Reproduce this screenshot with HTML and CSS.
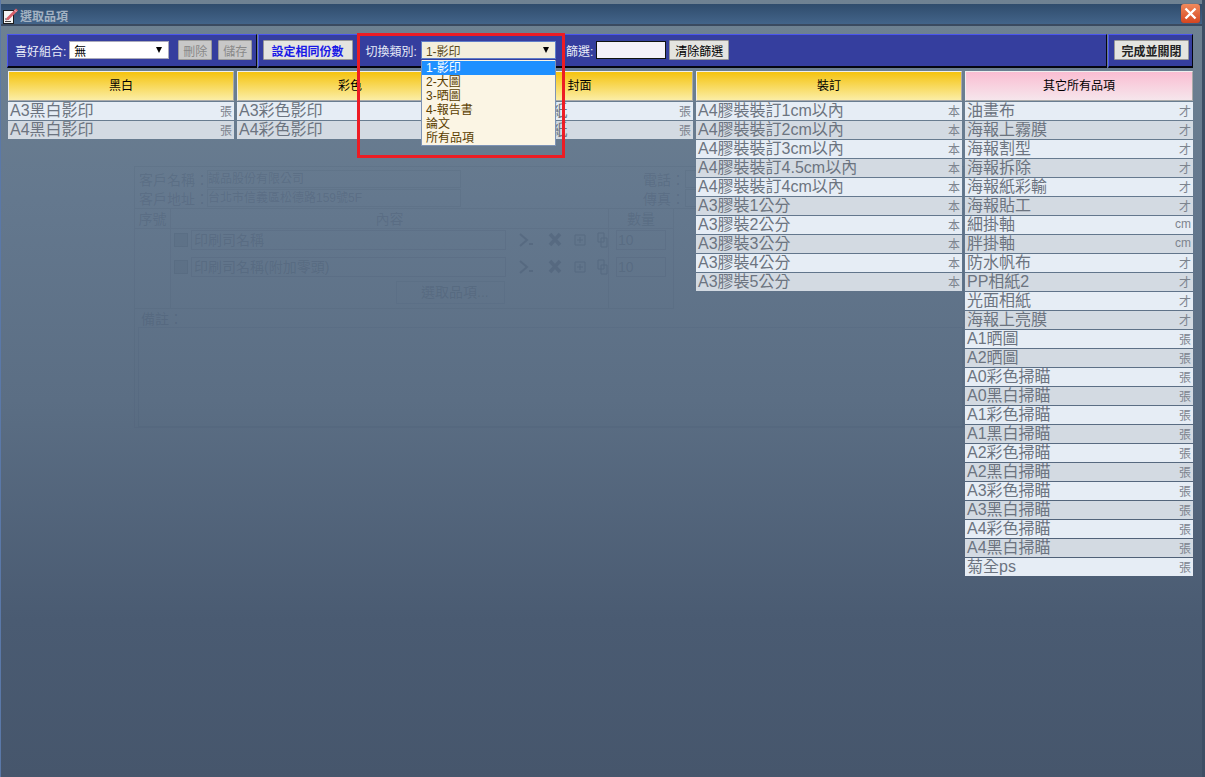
FILE: index.html
```html
<!DOCTYPE html>
<html lang="zh-Hant">
<head>
<meta charset="UTF-8">
<title>選取品項</title>
<link rel="stylesheet" href="styles.css">
</head>
<body>

<div class="dialog">

  <!-- the page behind the dialog, seen faintly through it -->
  <div class="ghost">
    <div class="g-row g-info">
      <span class="g-label">客戶名稱：</span>
      <div class="g-field">誠品股份有限公司</div>
      <span class="g-side">電話：</span>
      <div class="g-side-field"></div>
    </div>
    <div class="g-row g-info">
      <span class="g-label">客戶地址：</span>
      <div class="g-field">台北市信義區松德路159號5F</div>
      <span class="g-side">傳真：</span>
      <div class="g-side-field"></div>
    </div>
    <div class="g-table">
      <div class="g-c1 g-head">序號</div>
      <div class="g-c2 g-head">內容</div>
      <div class="g-c3 g-head">數量</div>
      <div class="g-c1 g-body"></div>
      <div class="g-c2 g-body">
        <div class="g-line">
          <i class="g-check"></i>
          <div class="g-name">印刷司名稱</div>
          <svg class="g-tools" width="90" height="16" viewBox="0 0 90 16"><path d="M2 2l7 6-7 6M11 12h4" stroke="#3e506a" stroke-width="2" fill="none"/><path d="M32 2l10 11M42 2L32 13" stroke="#3e506a" stroke-width="3.5"/><path d="M57 3h10v10H57zM62 5v6M59 8h6" stroke="#3e506a" fill="none"/><path d="M80 1h6v9h-6zM83 6h6v9h-6z" stroke="#3e506a" fill="none"/></svg>
        </div>
        <div class="g-line">
          <i class="g-check"></i>
          <div class="g-name">印刷司名稱(附加零頭)</div>
          <svg class="g-tools" width="90" height="16" viewBox="0 0 90 16"><path d="M2 2l7 6-7 6M11 12h4" stroke="#3e506a" stroke-width="2" fill="none"/><path d="M32 2l10 11M42 2L32 13" stroke="#3e506a" stroke-width="3.5"/><path d="M57 3h10v10H57zM62 5v6M59 8h6" stroke="#3e506a" fill="none"/><path d="M80 1h6v9h-6zM83 6h6v9h-6z" stroke="#3e506a" fill="none"/></svg>
        </div>
        <div class="g-pick">選取品項...</div>
      </div>
      <div class="g-c3 g-body">
        <div class="g-qty">10</div>
        <div class="g-qty">10</div>
      </div>
    </div>
    <div class="g-note-label">備註：</div>
    <div class="g-note"></div>
  </div>

  <div class="titlebar">
    <svg class="title-icon" width="17" height="17" viewBox="0 0 17 17">
      <rect x="1.5" y="3.5" width="10" height="13" fill="#f4f4f4" stroke="#1c1c1c"/>
      <path d="M3 12h4M3 14.5h6" stroke="#444"/>
      <path d="M5 10.5l9-9 2 2-9 9-3 1z" fill="#d8606a"/>
      <path d="M12.5 3l2 2" stroke="#f6c0c4"/>
    </svg>
    <span class="title-text">選取品項</span>
    <div class="close-btn">
      <svg width="13" height="13" viewBox="0 0 13 13"><path d="M1.5 1.5l10 10M11.5 1.5l-10 10" stroke="#fff" stroke-width="2.4"/></svg>
    </div>
  </div>

  <div class="content">
    <div class="toolbar">
      <div class="tool-group group-fav">
        <span class="tool-label">喜好組合:</span>
        <div class="select fav-select"><span>無</span><i class="arrow"></i></div>
        <button class="btn btn-off">刪除</button>
        <button class="btn btn-off">儲存</button>
      </div>
      <div class="tool-group group-main">
        <button class="btn btn-blue">設定相同份數</button>
        <span class="tool-label label-switch">切換類別:</span>
        <div class="select cat-select"><span>1-影印</span><i class="arrow"></i></div>
        <span class="tool-label label-filter">篩選:</span>
        <input class="filter-input" type="text">
        <button class="btn btn-clear">清除篩選</button>
      </div>
      <div class="tool-group group-done">
        <button class="btn btn-done">完成並關閉</button>
      </div>
    </div>

    <div class="columns">
      <div class="col col-a">
        <div class="col-head">黑白</div>
        <div class="item"><span>A3黑白影印</span><em>張</em></div>
        <div class="item"><span>A4黑白影印</span><em>張</em></div>
      </div>
      <div class="col col-a">
        <div class="col-head">彩色</div>
        <div class="item"><span>A3彩色影印</span><em>張</em></div>
        <div class="item"><span>A4彩色影印</span><em>張</em></div>
      </div>
      <div class="col col-b">
        <div class="col-head">封面</div>
        <div class="item"><span>A3封面雲彩紙</span><em>張</em></div>
        <div class="item"><span>A4封面雲彩紙</span><em>張</em></div>
      </div>
      <div class="col col-c">
        <div class="col-head">裝訂</div>
        <div class="item"><span>A4膠裝裝訂1cm以內</span><em>本</em></div>
        <div class="item"><span>A4膠裝裝訂2cm以內</span><em>本</em></div>
        <div class="item"><span>A4膠裝裝訂3cm以內</span><em>本</em></div>
        <div class="item"><span>A4膠裝裝訂4.5cm以內</span><em>本</em></div>
        <div class="item"><span>A4膠裝裝訂4cm以內</span><em>本</em></div>
        <div class="item"><span>A3膠裝1公分</span><em>本</em></div>
        <div class="item"><span>A3膠裝2公分</span><em>本</em></div>
        <div class="item"><span>A3膠裝3公分</span><em>本</em></div>
        <div class="item"><span>A3膠裝4公分</span><em>本</em></div>
        <div class="item"><span>A3膠裝5公分</span><em>本</em></div>
      </div>
      <div class="col col-d">
        <div class="col-head head-pink">其它所有品項</div>
        <div class="item"><span>油畫布</span><em>才</em></div>
        <div class="item"><span>海報上霧膜</span><em>才</em></div>
        <div class="item"><span>海報割型</span><em>才</em></div>
        <div class="item"><span>海報拆除</span><em>才</em></div>
        <div class="item"><span>海報紙彩輸</span><em>才</em></div>
        <div class="item"><span>海報貼工</span><em>才</em></div>
        <div class="item"><span>細掛軸</span><em>cm</em></div>
        <div class="item"><span>胖掛軸</span><em>cm</em></div>
        <div class="item"><span>防水帆布</span><em>才</em></div>
        <div class="item"><span>PP相紙2</span><em>才</em></div>
        <div class="item"><span>光面相紙</span><em>才</em></div>
        <div class="item"><span>海報上亮膜</span><em>才</em></div>
        <div class="item"><span>A1晒圖</span><em>張</em></div>
        <div class="item"><span>A2晒圖</span><em>張</em></div>
        <div class="item"><span>A0彩色掃瞄</span><em>張</em></div>
        <div class="item"><span>A0黑白掃瞄</span><em>張</em></div>
        <div class="item"><span>A1彩色掃瞄</span><em>張</em></div>
        <div class="item"><span>A1黑白掃瞄</span><em>張</em></div>
        <div class="item"><span>A2彩色掃瞄</span><em>張</em></div>
        <div class="item"><span>A2黑白掃瞄</span><em>張</em></div>
        <div class="item"><span>A3彩色掃瞄</span><em>張</em></div>
        <div class="item"><span>A3黑白掃瞄</span><em>張</em></div>
        <div class="item"><span>A4彩色掃瞄</span><em>張</em></div>
        <div class="item"><span>A4黑白掃瞄</span><em>張</em></div>
        <div class="item"><span>菊全ps</span><em>張</em></div>
      </div>
    </div>
  </div>

  <div class="dropdown">
    <div class="opt opt-on">1-影印</div>
    <div class="opt">2-大圖</div>
    <div class="opt">3-晒圖</div>
    <div class="opt">4-報告書</div>
    <div class="opt">論文</div>
    <div class="opt">所有品項</div>
  </div>
  <div class="red-box"></div>

</div>

</body>
</html>
```

FILE: styles.css
```css
html, body {
  margin: 0;
  padding: 0;
  height: 100%;
  overflow: hidden;
}
body {
  font-family: "Liberation Sans", "Noto Sans CJK TC", sans-serif;
  background-color: #4a5c74;
}
.dialog {
  position: relative;
  height: 777px;
  box-sizing: border-box;
  padding-top: 4px;
  background: linear-gradient(#6f8292 0, #64788e 200px, #5b6e84 400px, #4a5b72 620px, #46566c 777px);
  border-left: 1px solid #5a78a8;
  border-right: 3px solid #3d4e64;
}
.titlebar {
  position: relative;
  display: flex;
  align-items: center;
  box-sizing: border-box;
  height: 22px;
  padding-left: 1px;
  padding-top: 2px;
  background: linear-gradient(#2f4c6c, #43648a);
  border-bottom: 2px solid #3a4a60;
}
.title-icon {
  margin-right: 1px;
}
.title-text {
  font-size: 12px;
  font-weight: bold;
  color: #a3b2c2;
}
.close-btn {
  display: flex;
  align-items: center;
  justify-content: center;
  width: 19px;
  height: 19px;
  margin-left: auto;
  margin-right: 2px;
  margin-top: -3px;
  border-radius: 3px;
  background: linear-gradient(#f08a5c, #d5451f);
  box-shadow: 0 0 1px #7a2a10;
}
.content {
  position: relative;
  padding: 8px 9px 0 6px;
}

/* toolbar */
.toolbar {
  display: flex;
  gap: 1px;
  height: 34px;
}
.tool-group {
  display: flex;
  align-items: center;
  box-sizing: border-box;
  padding-bottom: 1px;
  background-color: #353e9e;
  border-top: 1px solid #4a55ee;
  border-left: 1px solid #4a55ee;
  border-bottom: 2px solid #05060f;
  border-right: 1px solid #05060f;
}
.group-fav {
  width: 250px;
  padding-left: 7px;
}
.group-main {
  width: 851px;
  padding-left: 4px;
}
.group-done {
  width: 85px;
  padding-left: 5px;
}
.tool-label {
  font-size: 12px;
  color: #e8ecf8;
}
.label-switch {
  margin-left: 13px;
}
.label-filter {
  margin-left: 10px;
}
.select {
  display: flex;
  align-items: center;
  justify-content: space-between;
  box-sizing: border-box;
  height: 18px;
  padding: 0 6px 0 4px;
  font-size: 12px;
  border: 1px solid #aab;
}
.fav-select {
  width: 100px;
  margin-left: 3px;
  background-color: #fff;
  color: #000;
}
.cat-select {
  width: 135px;
  margin-left: 4px;
  background-color: #f3efdd;
  color: #5a4a20;
  border-color: #5e7ec8;
}
.arrow {
  width: 0;
  height: 0;
  border-left: 3.5px solid transparent;
  border-right: 3.5px solid transparent;
  border-top: 6px solid #000;
}
.btn {
  box-sizing: border-box;
  height: 20px;
  padding: 0;
  font-family: inherit;
  font-size: 12px;
  background-color: #e4e4e0;
  border: 1px solid #999;
  border-radius: 1px;
  color: #000;
}
.btn-off {
  width: 34px;
  margin-left: 6px;
  color: #888;
  background-color: #c8c8c8;
}
.btn-off:first-of-type {
  margin-left: 9px;
}
.btn-blue {
  width: 90px;
  font-weight: bold;
  color: #1a1ae6;
}
.btn-clear {
  width: 60px;
  margin-left: 3px;
}
.btn-done {
  width: 75px;
  font-weight: bold;
  color: #222;
}
.filter-input {
  box-sizing: border-box;
  width: 70px;
  height: 18px;
  margin-left: 3px;
  padding: 0;
  background-color: #f4f0fa;
  border: 1px solid #111;
}

/* columns */
.columns {
  display: flex;
  align-items: flex-start;
  gap: 3px;
  margin-top: 3px;
  margin-left: 1px;
}
.col-a { width: 226px; }
.col-b { width: 227px; }
.col-c { width: 266px; }
.col-d { width: 228px; }
.col-head {
  box-sizing: border-box;
  height: 30px;
  line-height: 28px;
  margin-bottom: 1px;
  text-align: center;
  font-size: 12px;
  color: #000;
  background: linear-gradient(#f5c30f, #fbeea6);
  border-top: 1px solid #eee;
  border-left: 1px solid #eee;
  border-right: 1px solid #aaa;
  border-bottom: 1px solid #aaa;
}
.head-pink {
  background: linear-gradient(#fabdd2, #f6e6ec);
}
.item {
  display: flex;
  justify-content: space-between;
  align-items: center;
  height: 18px;
  margin-bottom: 1px;
  padding: 0 2px 0 2px;
  background-color: #e6edf5;
  color: #6c7480;
  overflow: hidden;
}
.item:nth-child(odd) {
  background-color: #d3dae2;
}
.item span {
  font-size: 16px;
  line-height: 18px;
  white-space: nowrap;
}
.item em {
  margin-bottom: 2px;
  font-style: normal;
  font-size: 12px;
  color: #7d848e;
}

/* open list and the red mark lie over the page */
.dropdown {
  position: absolute;
  left: 420px;
  top: 60px;
  box-sizing: border-box;
  width: 135px;
  height: 86px;
  padding-top: 1px;
  background-color: #fbf5e4;
  border: 1px solid #7d93b5;
  border-top: none;
}
.opt {
  height: 14px;
  line-height: 14px;
  padding-left: 4px;
  font-size: 12px;
  color: #5a3e00;
}
.opt-on {
  background-color: #1e90ff;
  color: #fff;
}
.red-box {
  position: absolute;
  left: 356px;
  top: 33px;
  box-sizing: border-box;
  width: 208px;
  height: 125px;
  border: 3px solid #ed1c24;
}

/* faint page behind the dialog */
.ghost {
  position: absolute;
  left: 133px;
  top: 166px;
  box-sizing: border-box;
  width: 830px;
  height: 262px;
  padding: 2px 0 0;
  border: 1px solid rgba(62, 80, 106, 0.12);
  font-size: 14px;
  color: rgba(52, 68, 94, 0.2);
}
.g-row {
  display: flex;
  align-items: center;
  height: 19px;
}
.g-label {
  width: 72px;
  padding-left: 4px;
  box-sizing: border-box;
  white-space: nowrap;
}
.g-field {
  width: 254px;
  height: 18px;
  line-height: 16px;
  font-size: 12px;
  box-sizing: border-box;
  border: 1px solid rgba(62, 80, 106, 0.12);
  white-space: nowrap;
}
.g-side {
  margin-left: 182px;
  width: 42px;
}
.g-side-field {
  width: 120px;
  height: 16px;
  border: 1px solid rgba(62, 80, 106, 0.12);
}
.g-table {
  display: grid;
  grid-template-columns: 36px 438px 65px 1fr;
  grid-template-rows: 20px 80px;
  margin-top: 1px;
  border-top: 1px solid rgba(62, 80, 106, 0.12);
}
.g-head {
  line-height: 20px;
  text-align: center;
  border-bottom: 1px solid rgba(62, 80, 106, 0.12);
}
.g-c1, .g-c2, .g-c3 {
  border-right: 1px solid rgba(62, 80, 106, 0.12);
}
.g-c1 { grid-column: 1; }
.g-c2 { grid-column: 2; }
.g-c3 { grid-column: 3; }
.g-c3.g-body {
  padding: 1px 7px 0;
}
.g-body {
  border-bottom: 1px solid rgba(62, 80, 106, 0.12);
}
.g-line {
  display: flex;
  align-items: center;
  height: 20px;
  margin: 1px 0 7px 3px;
}
.g-check {
  flex: none;
  width: 12px;
  height: 12px;
  margin-right: 3px;
  background-color: rgba(62, 80, 106, 0.1);
  border: 1px solid rgba(62, 80, 106, 0.12);
}
.g-name {
  flex: none;
  width: 315px;
  height: 20px;
  line-height: 18px;
  padding-left: 2px;
  box-sizing: border-box;
  border: 1px solid rgba(62, 80, 106, 0.14);
  white-space: nowrap;
}
.g-tools {
  flex: none;
  margin-left: 12px;
  opacity: 0.3;
}
.g-pick {
  width: 109px;
  height: 23px;
  line-height: 21px;
  margin-left: 225px;
  margin-top: -3px;
  padding-left: 24px;
  box-sizing: border-box;
  border: 1px solid rgba(62, 80, 106, 0.1);
  white-space: nowrap;
  overflow: hidden;
}
.g-qty {
  height: 20px;
  line-height: 18px;
  margin-bottom: 7px;
  padding-left: 1px;
  box-sizing: border-box;
  border: 1px solid rgba(62, 80, 106, 0.14);
}
.g-note-label {
  height: 18px;
  line-height: 20px;
  padding-left: 6px;
}
.g-note {
  height: 100px;
  margin-left: 3px;
  box-sizing: border-box;
  border: 1px solid rgba(62, 80, 106, 0.1);
}
```
